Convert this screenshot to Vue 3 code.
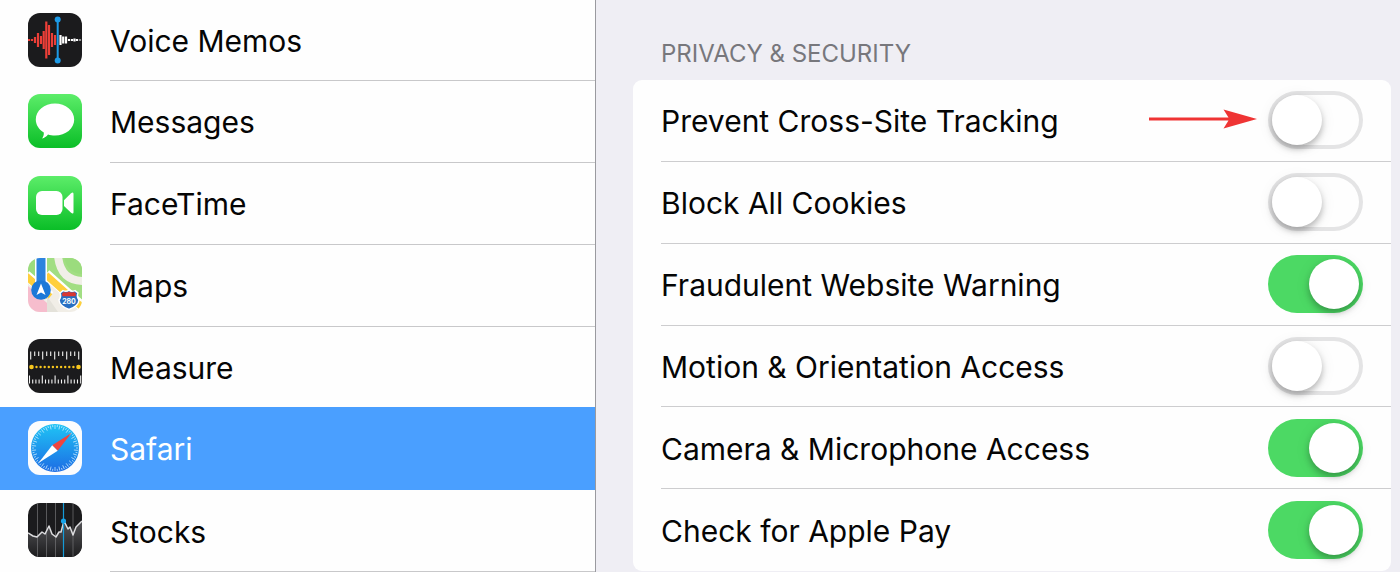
<script setup>
import { ref } from 'vue'

const apps = ['Voice Memos', 'Messages', 'FaceTime', 'Maps', 'Measure', 'Safari', 'Stocks']
const selected = 'Safari'

const settings = ref([
  { id: 'tracking', label: 'Prevent Cross-Site Tracking', on: false, arrow: true },
  { id: 'cookies', label: 'Block All Cookies', on: false },
  { id: 'fraud', label: 'Fraudulent Website Warning', on: true },
  { id: 'motion', label: 'Motion & Orientation Access', on: false },
  { id: 'camera', label: 'Camera & Microphone Access', on: true },
  { id: 'applepay', label: 'Check for Apple Pay', on: true },
])

const wave = [
  [1, 1], [4, 1], [7, 3], [10, 7], [13, 4], [15.7, 9], [18.3, 18.5], [21, 15], [24, 7], [27, 5],
]
const waveWhite = [[32.5, 5], [35.2, 3.5], [38, 3.5], [41, 1], [44, 1], [46.5, 1.4], [49, 1], [52, 0.6]]
const topTicks = Array.from({ length: 13 }, (_, i) => 2.7 + i * 4)
const bottomTicks = Array.from({ length: 17 }, (_, i) => 1.5 + i * 3.2)
const dots = Array.from({ length: 10 }, (_, i) => 8.5 + i * 4.1)
const dial = Array.from({ length: 60 }, (_, i) => i * 6)
</script>

<template>
  <div class="page">
    <nav class="sidebar" aria-label="Apps">
      <a
        v-for="app in apps"
        :key="app"
        href="#"
        class="app"
        :class="{ selected: app === selected }"
        :aria-current="app === selected ? 'page' : undefined"
      >
        <svg class="icon" viewBox="0 0 54 54" aria-hidden="true">
          <defs>
            <linearGradient id="green" x1="0" y1="0" x2="0" y2="1">
              <stop offset="0" stop-color="#5ced69" />
              <stop offset="1" stop-color="#0abe27" />
            </linearGradient>
            <linearGradient id="blue" x1="0" y1="0" x2="0" y2="1">
              <stop offset="0" stop-color="#1fc4f5" />
              <stop offset="1" stop-color="#1d6ce4" />
            </linearGradient>
            <linearGradient id="area" x1="0" y1="0" x2="0" y2="1">
              <stop offset="0" stop-color="#555558" />
              <stop offset="1" stop-color="#1c1c1e" />
            </linearGradient>
            <clipPath id="tile"><rect width="54" height="54" rx="12" /></clipPath>
          </defs>

          <g v-if="app === 'Voice Memos'" clip-path="url(#tile)">
            <rect width="54" height="54" fill="#1b1b1d" />
            <g stroke="#ed3f38" stroke-width="2.200">
              <line v-for="[x, h] in wave" :key="x" :x1="x" :x2="x" :y1="27 - h" :y2="27 + h" />
            </g>
            <g stroke="#fff" stroke-width="2.200">
              <line v-for="[x, h] in waveWhite" :key="x" :x1="x" :x2="x" :y1="27 - h" :y2="27 + h" />
            </g>
            <path d="M29.7 6V48" stroke="#1d9be8" stroke-width="2" />
            <circle cx="29.700" cy="6.500" r="3" fill="#1d9be8" />
            <circle cx="29.700" cy="47.500" r="3" fill="#1d9be8" />
          </g>

          <g v-else-if="app === 'Messages'">
            <rect width="54" height="54" rx="12" fill="url(#green)" />
            <path d="M27 9.5C37.8 9.5 46.2 16.500 46.2 25.500S37.8 41.500 27 41.500c-2.700 0-4.800-.3-7-1-1.500 2-3.600 3.500-6 4 1.300-1.600 2-3.500 1.800-6C10.800 35.600 7.800 30.700 7.800 25.500 7.800 16.500 16.200 9.500 27 9.500Z" fill="#fff" />
          </g>

          <g v-else-if="app === 'FaceTime'">
            <rect width="54" height="54" rx="12" fill="url(#green)" />
            <rect x="8" y="15" width="26.500" height="24" rx="6" fill="#fff" />
            <path d="M36 24.200 42.800 17.500Q45.500 15.200 45.500 18V36Q45.500 38.800 42.800 36.500L36 30Z" fill="#fff" />
          </g>

          <g v-else-if="app === 'Maps'" clip-path="url(#tile)">
            <rect width="54" height="54" fill="#f1eee7" />
            <path d="M19 0H54V46L19 15Z" fill="#a2de83" />
            <path d="M30 -2C32 16 41 23 56 23" fill="none" stroke="#f1efe8" stroke-width="8" />
            <path d="M36 -2C38 10 44 16 56 16V-2Z" fill="#9bdc7d" />
            <path d="M0 28 19 45V54H0Z" fill="#f6bdcd" />
            <path d="M0 0H8V26H0Z" fill="#9bdc7d" />
            <path d="M-2 17 22 38M18 16 56 50" fill="none" stroke="#fff" stroke-width="10" />
            <path d="M-2 18 22 39M18 17 56 51" fill="none" stroke="#ffcf3c" stroke-width="7" />
            <path d="M19 38 30 54H19Z" fill="#e4e2da" />
            <rect x="7" width="12" height="32" fill="#fff" />
            <rect x="8.500" width="9" height="32" fill="#2c83df" />
            <circle cx="13" cy="32" r="9.800" fill="#1c79d8" />
            <path d="M13 25.500 17.500 37 13 34.600 8.500 37Z" fill="#fff" />
            <path d="m32 35 3-2.400q3.500 1.600 6-.4 2.500 2 6 .4l3 2.400q-1.600 3.500 1 7-.4 6-10 9.500-9.600-3.500-10-9.500 2.600-3.500 1-7Z" fill="#286fc2" stroke="#fff" stroke-width="1.500" />
            <path d="m34 35.500 2-1.400q2.700.8 5-.6 2.300 1.400 5 .6l2 1.400-.4 2.700H34.400Z" fill="#d93732" />
            <text x="41" y="46" text-anchor="middle" class="shield">280</text>
          </g>

          <g v-else-if="app === 'Measure'" clip-path="url(#tile)">
            <rect width="54" height="54" fill="#1b1b1d" />
            <g stroke="#f4f4f4" stroke-width="1.100">
              <line v-for="(x, i) in topTicks" :key="'t' + x" :x1="x" :x2="x" y1="12.500" :y2="i % 3 === 0 ? 20.500 : 17" />
              <line v-for="(x, i) in bottomTicks" :key="'b' + x" :x1="x" :x2="x" :y1="i % 4 === 0 ? 36.500 : 40.500" y2="44.500" />
            </g>
            <g fill="#f7c61e">
              <circle cx="3.500" cy="28" r="2.300" />
              <circle v-for="x in dots" :key="x" :cx="x" cy="28" r="1.200" />
              <circle cx="50.500" cy="28" r="2.300" />
            </g>
          </g>

          <g v-else-if="app === 'Safari'">
            <rect width="54" height="54" rx="12" fill="#fcfcfd" />
            <circle cx="27" cy="27" r="24" fill="url(#blue)" />
            <g stroke="#d2efff" stroke-width=".7">
              <line v-for="(a, i) in dial" :key="a" x1="27" x2="27" y1="4" :y2="i % 2 ? 6 : 8" :transform="`rotate(${a} 27 27)`" />
            </g>
            <path d="M43.500 12 24.200 24.300 29.700 29.800Z" fill="#f0443e" />
            <path d="M10.500 42 24.200 24.300 29.700 29.800Z" fill="#fff" />
          </g>

          <g v-else clip-path="url(#tile)">
            <rect width="54" height="54" fill="#1b1b1d" />
            <path d="M0 31 5 33 9 34 14 29 17 31 21 23 24 31 28 34 31 29 33 29 37 18 40 26 42 24 45 32 48 24 54 18V54H0Z" fill="url(#area)" />
            <path d="M9.500 0V54M18.500 0V54M27.500 0V54M45 0V54" stroke="#747477" stroke-width=".7" />
            <path d="M0 30 5 33 9 34 14 29 17 31 21 23 24 31 28 34 31 29 33 29 36 18 40 26 42 24 45 32 48 24 54 18" fill="none" stroke="#dddddf" stroke-width="1.500" stroke-linejoin="round" />
            <path d="M35.500 0V54" stroke="#159bd8" stroke-width="1.200" />
            <circle cx="35.500" cy="18" r="2.600" fill="#18a3e8" />
          </g>
        </svg>
        <span class="app-name">{{ app }}</span>
      </a>
    </nav>

    <main class="content">
      <h2 class="heading">PRIVACY &amp; SECURITY</h2>
      <div class="card">
        <div v-for="item in settings" :key="item.id" class="setting">
          <label :for="item.id" class="setting-label">{{ item.label }}</label>
          <svg v-if="item.arrow" class="arrow" viewBox="0 0 108 20" aria-hidden="true">
            <path d="M0 8.500H79.500L74.500 0.500 108 10 74.500 19.500 79.500 11.500H0Z" fill="#ef3434" />
          </svg>
          <input :id="item.id" v-model="item.on" type="checkbox" role="switch" class="switch" />
        </div>
      </div>
    </main>
  </div>
</template>

<style>
body {
  margin: 0;
}
</style>

<style scoped>
.page {
  display: grid;
  grid-template-columns: minmax(0, 596fr) minmax(0, 804fr);
  min-height: 100vh;
  font-family: Inter, "Liberation Sans", sans-serif;
  font-size: 30px;
  line-height: 40px;
  color: #050505;
  background: #efeef4;
}

.sidebar {
  display: grid;
  grid-template-rows: 81px;
  grid-auto-rows: 1fr;
  background: #fefefe;
  border-right: 1px solid #9a9a9f;
}

.app {
  display: flex;
  align-items: center;
  gap: 28px;
  padding-left: 28px;
  color: inherit;
  text-decoration: none;
}

.icon {
  flex: none;
  width: 54px;
  height: 54px;
  margin-bottom: 2px;
}

.shield {
  font-size: 7px;
  font-weight: 700;
  fill: #fff;
}

.app-name {
  display: flex;
  flex: 1;
  align-self: stretch;
  align-items: center;
  padding-top: 2px;
  border-bottom: 1px solid #c8c8ca;
}

.selected {
  margin-top: -1px;
  color: #fff;
  background: #4a9fff;
}

.selected .app-name {
  border-color: transparent;
}

.content {
  display: flex;
  flex-direction: column;
  padding: 0 9px 1px 37px;
}

.heading {
  box-sizing: border-box;
  height: 80px;
  margin: 0;
  padding: 34px 28px 0;
  font-size: 24px;
  font-weight: 400;
  color: #77777c;
}

.card {
  display: grid;
  flex: 1;
  grid-auto-rows: 1fr;
  padding-left: 28px;
  background: #fefefe;
  border-radius: 9px;
}

.setting {
  display: flex;
  align-items: center;
  padding-right: 28px;
  border-bottom: 1px solid #cdcdcf;
}

.setting:last-child {
  border-bottom-color: transparent;
}

.setting-label {
  flex: 1;
  padding-top: 2px;
}

.arrow {
  width: 108px;
  height: 20px;
  margin-right: 11px;
  margin-bottom: 2px;
}

.switch {
  display: flex;
  flex: none;
  appearance: none;
  box-sizing: border-box;
  width: 95px;
  height: 58px;
  margin: 0;
  padding: 4px;
  background: #fefefe;
  border-radius: 29px;
  box-shadow: inset 0 0 0 4px #e4e4e5;
}

.switch::before {
  content: "";
  width: 50px;
  height: 50px;
  background: #fff;
  border-radius: 50%;
  box-shadow: 0 4px 6px rgba(0, 0, 0, 0.25), 0 2px 16px rgba(0, 0, 0, 0.08);
}

.switch:checked {
  justify-content: flex-end;
  background: #4cd964;
  box-shadow: none;
}
</style>
